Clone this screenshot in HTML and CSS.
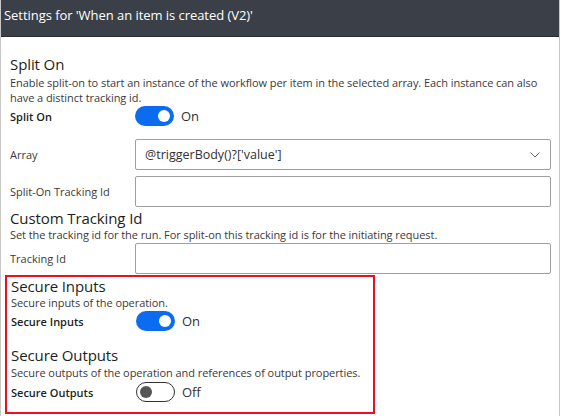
FILE: index.html
```html
<!DOCTYPE html>
<html lang="en">
<head>
<meta charset="utf-8">
<title>Settings</title>
<link rel="stylesheet" href="styles.css">
</head>
<body>
<div class="panel">
  <div class="header">Settings for 'When an item is created (V2)'</div>
  <div class="content">
    <h2 class="heading">Split On</h2>
    <p class="desc">Enable split-on to start an instance of the workflow per item in the selected array. Each instance can also have a distinct tracking id.</p>
    <div class="row row-toggle">
      <span class="label label-bold">Split On</span>
      <span class="toggle on"><span class="knob"></span></span>
      <span class="state">On</span>
    </div>
    <div class="row row-field row-array">
      <span class="label">Array</span>
      <div class="field select">
        <span class="value">@triggerBody()?['value']</span>
        <svg class="chevron" width="10" height="6" viewBox="0 0 10 6"><path d="M0.5 0.5 L5 5 L9.5 0.5" fill="none" stroke="#6b6b6b" stroke-width="1"/></svg>
      </div>
    </div>
    <div class="row row-field row-gap">
      <span class="label">Split-On Tracking Id</span>
      <div class="field"></div>
    </div>
    <h2 class="heading heading-custom">Custom Tracking Id</h2>
    <p class="desc desc-flush">Set the tracking id for the run. For split-on this tracking id is for the initiating request.</p>
    <div class="row row-field row-tracking">
      <span class="label">Tracking Id</span>
      <div class="field"></div>
    </div>
    <div class="highlight">
      <h2 class="heading">Secure Inputs</h2>
      <p class="desc desc-flush">Secure inputs of the operation.</p>
      <div class="row row-toggle">
        <span class="label label-bold">Secure Inputs</span>
        <span class="toggle on"><span class="knob"></span></span>
        <span class="state">On</span>
      </div>
      <h2 class="heading heading-outputs">Secure Outputs</h2>
      <p class="desc desc-one">Secure outputs of the operation and references of output properties.</p>
      <div class="row row-toggle row-toggle-2">
        <span class="label label-bold">Secure Outputs</span>
        <span class="toggle off"><span class="knob"></span></span>
        <span class="state">Off</span>
      </div>
    </div>
  </div>
</div>
</body>
</html>
```

FILE: styles.css
```css
* { box-sizing: border-box; }
html, body {
  margin: 0;
  padding: 0;
  background: #ffffff;
}
body {
  font-family: "Open Sans", "Noto Sans", sans-serif;
  color: #323130;
}
.panel {
  width: 560px;
  height: 416px;
  border-left: 1px solid #c8c8c8;
  border-right: 1px solid #c8c8c8;
  overflow: hidden;
}
.header {
  height: 37px;
  margin-left: -1px;
  margin-right: -1px;
  background: #3b4048;
  border-bottom: 1px solid #2a2e33;
  color: #ffffff;
  font-size: 13px;
  line-height: 31px;
  padding-left: 4px;
  letter-spacing: -0.05px;
}
.content {
  padding: 18px 8px 0 9px;
}
.heading {
  margin: 0;
  font-size: 15px;
  line-height: 18px;
  font-weight: 400;
  color: #201f1e;
  letter-spacing: -0.1px;
}
.heading-custom { margin-top: 2px; }
.heading-outputs { margin-top: 15px; }
.desc {
  margin: 2px 0 0;
  font-size: 11px;
  line-height: 15px;
  color: #3b3a39;
  letter-spacing: -0.06px;
}
.desc-flush { margin-top: 0; }
.desc-one { margin-top: 1px; }
.row {
  display: flex;
  align-items: center;
}
.label {
  width: 125px;
  flex: none;
  font-size: 11px;
  color: #3b3a39;
}
.label-bold {
  font-weight: 600;
  color: #201f1e;
}
.row-toggle { height: 20px; margin-top: 1px; }
.row-toggle-2 { margin-top: 2px; }
.toggle {
  width: 39px;
  height: 20px;
  border-radius: 10px;
  display: flex;
  align-items: center;
  padding: 0 4px;
  flex: none;
}
.toggle .knob {
  width: 12px;
  height: 12px;
  border-radius: 50%;
}
.toggle.on {
  background: #0b6cf0;
  justify-content: flex-end;
}
.toggle.on .knob { background: #ffffff; }
.toggle.off {
  background: #ffffff;
  border: 1px solid #333333;
  padding: 0 3px;
}
.toggle.off .knob { background: #555555; }
.state {
  margin-left: 7px;
  font-size: 13px;
  color: #323130;
}
.row-field { height: 31px; }
.row-array { margin-top: 13px; }
.row-gap { margin-top: 6px; }
.row-tracking { margin-top: 1px; }
.field {
  flex: 1;
  height: 31px;
  border: 1px solid #a19f9d;
  border-radius: 2px;
  display: flex;
  align-items: center;
  padding: 0 10px 0 9px;
}
.select { justify-content: space-between; }
.value {
  font-size: 12.5px;
  color: #323130;
}
.highlight {
  margin-top: 1px;
  margin-left: -5px;
  width: 370px;
  height: 139px;
  border: 2px solid #e81123;
  padding: 0 4px;
}
```
